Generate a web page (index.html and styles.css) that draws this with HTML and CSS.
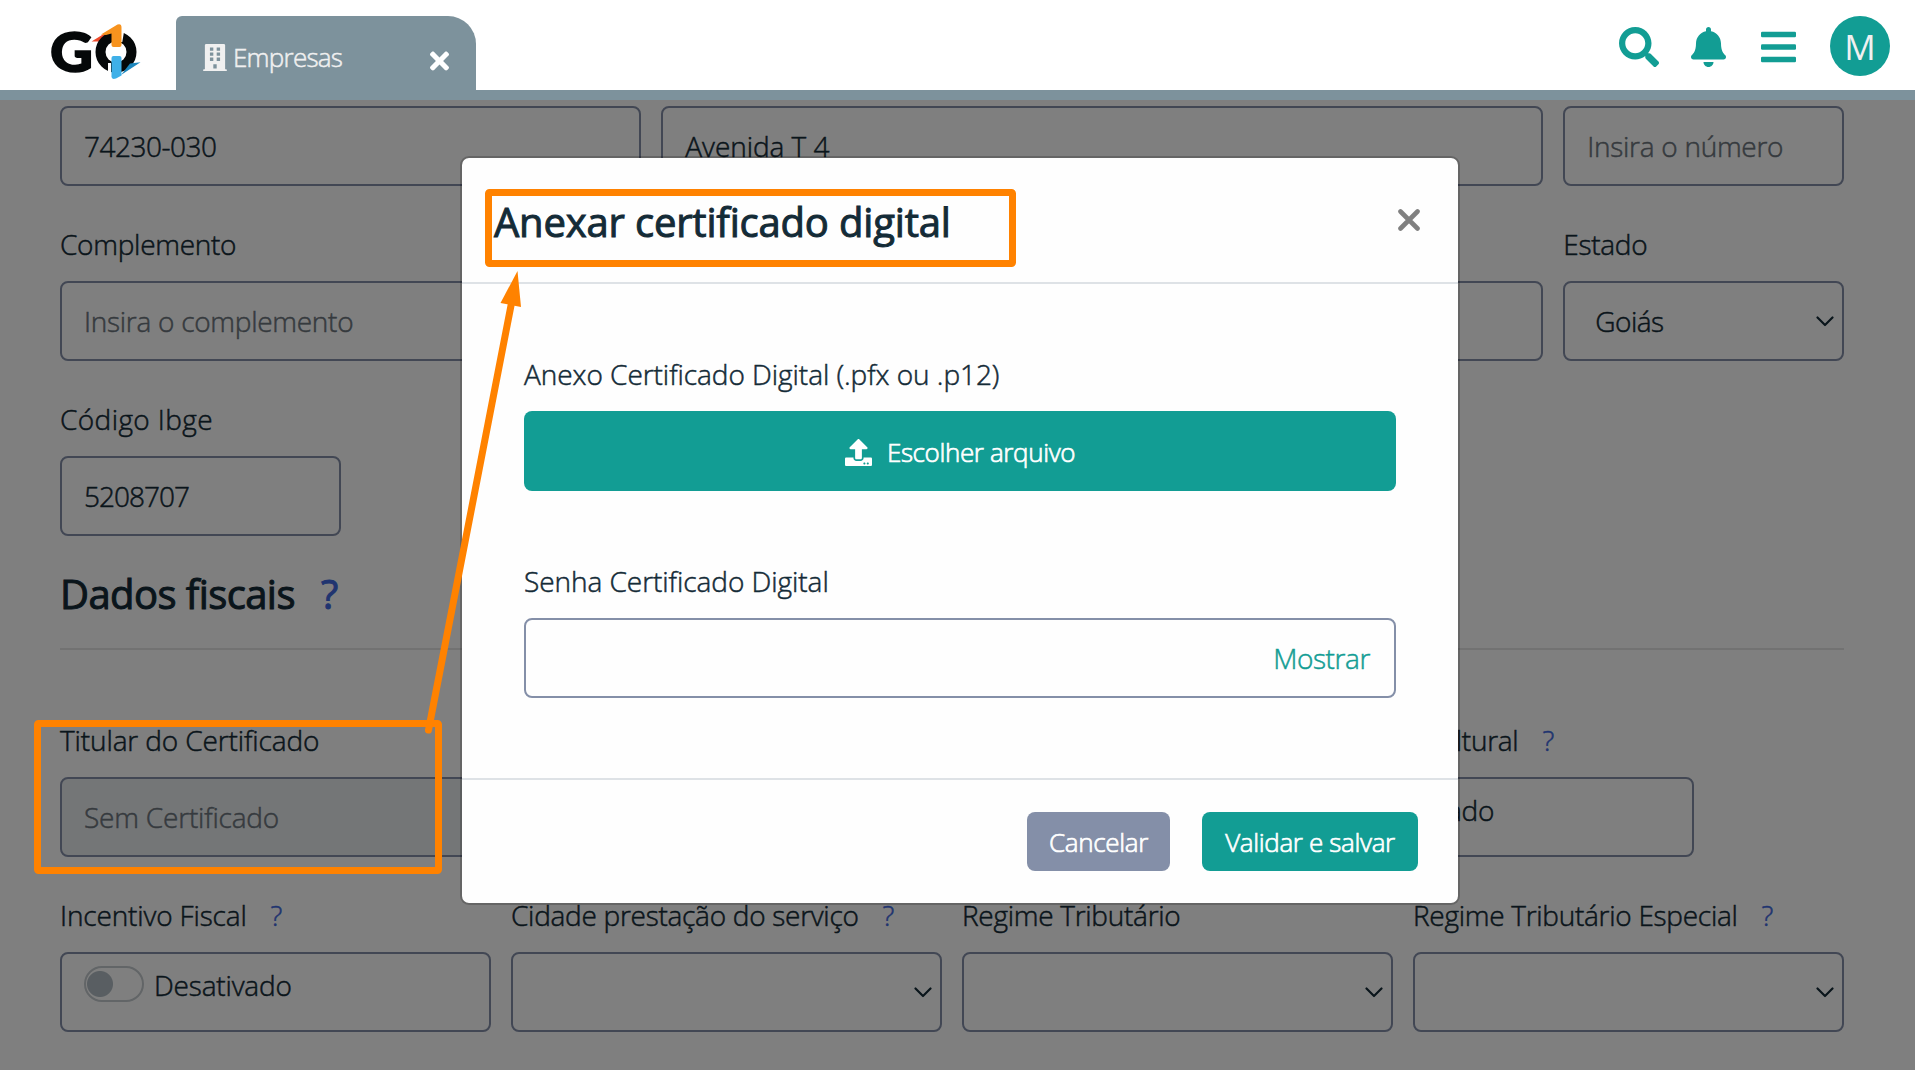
FILE: index.html
```html
<!DOCTYPE html>
<html lang="pt-BR">
<head>
<meta charset="utf-8">
<title>Empresas</title>
<link rel="stylesheet" href="styles.css">
</head>
<body>
<header class="topbar">
  <svg class="logo" viewBox="0 0 92 56" role="img" aria-label="GO">
    <text class="logo-letter" x="-1" y="48.3" textLength="43" lengthAdjust="spacingAndGlyphs">G</text>
    <path d="M40.500 17.500 60 5.500v4L54 13l-6 4.500z" fill="#ee4a2b"/>
    <circle cx="65" cy="28" r="15.500" fill="none" stroke="#050809" stroke-width="10"/>
    <path d="M70 6h3.300l-2 12H70zM57 39h3v12l-3-1z" fill="#fff"/>
    <path d="M79 39.500 89.500 38.300 70 51z" fill="#1c86bd"/>
    <path d="M50 10.500 66.500.6Q70.500-.6 70.500 3.500V21q0 2-2 2h-6q-2 0-2-2V9.500L55 11z" fill="#f7931e"/>
    <path d="M60.500 34q0-2 2-2h6q2 0 2 2v17.500l-5.500 3q-4.500 1.500-4.500-2z" fill="#3fb0e8"/>
  </svg>
  <div class="tab">
    <svg class="tab-icon" viewBox="0 0 448 512"><path fill-rule="evenodd" d="M436 480h-20V24c0-13-11-24-24-24H56C43 0 32 11 32 24v456H12c-7 0-12 5-12 12v20h448v-20c0-7-5-12-12-12zM128 64h64v64h-64zM256 64h64v64h-64zM128 160h64v64h-64zM256 160h64v64h-64zM128 256h64v64h-64zM256 256h64v64h-64zM192 384h64v80h-64z"/></svg>
    <span class="tab-name">Empresas</span>
    <svg class="tab-close" viewBox="0 0 352 512"><path d="M242.720 256l100.070-100.070c12.280-12.280 12.280-32.190 0-44.480l-22.240-22.240c-12.280-12.280-32.190-12.280-44.480 0L176 189.280 75.930 89.210c-12.280-12.280-32.190-12.280-44.480 0L9.210 111.450c-12.280 12.280-12.280 32.190 0 44.480L109.280 256 9.210 356.070c-12.280 12.280-12.280 32.190 0 44.480l22.240 22.240c12.280 12.280 32.200 12.280 44.480 0L176 322.720l100.070 100.070c12.280 12.280 32.200 12.280 44.480 0l22.240-22.240c12.280-12.280 12.280-32.190 0-44.480L242.720 256z"/></svg>
  </div>
  <nav class="actions">
    <svg class="action-search" viewBox="0 0 512 512"><path d="M505 442.700L405.300 343c-4.500-4.500-10.600-7-17-7H372c27.600-35.300 44-79.700 44-128C416 93.100 322.900 0 208 0S0 93.100 0 208s93.100 208 208 208c48.300 0 92.700-16.400 128-44v16.300c0 6.400 2.500 12.500 7 17l99.700 99.700c9.400 9.400 24.600 9.400 33.900 0l28.300-28.300c9.400-9.400 9.400-24.600.1-34zM208 336c-70.700 0-128-57.200-128-128 0-70.700 57.200-128 128-128 70.700 0 128 57.200 128 128 0 70.700-57.200 128-128 128z"/></svg>
    <svg class="action-icon" viewBox="0 0 448 512"><path d="M224 512c35.320 0 63.970-28.650 63.970-64H160.030c0 35.350 28.650 64 63.970 64zm215.390-149.710c-19.320-20.760-55.470-51.990-55.470-154.290 0-77.700-54.480-139.900-127.940-155.160V32c0-17.670-14.320-32-31.980-32s-31.980 14.330-31.980 32v20.840C118.560 68.100 64.080 130.300 64.080 208c0 102.300-36.150 133.530-55.470 154.290-6 6.450-8.660 14.160-8.610 21.710.11 16.400 12.980 32 32.100 32h383.800c19.120 0 32-15.600 32.100-32 .05-7.550-2.610-15.270-8.610-21.710z"/></svg>
    <svg class="action-icon" viewBox="0 0 448 512"><rect y="60" width="448" height="72" rx="16"/><rect y="220" width="448" height="72" rx="16"/><rect y="380" width="448" height="72" rx="16"/></svg>
    <span class="avatar">M</span>
  </nav>
</header>

<main class="page">
  <form class="form">
    <div class="row">
      <div class="field span-4"><div class="box digits">74230-030</div></div>
      <div class="field span-6"><div class="box street">Avenida T 4</div></div>
      <div class="field span-2"><div class="box placeholder">Insira o número</div></div>
    </div>
    <div class="row">
      <div class="field span-4"><div class="label">Complemento</div><div class="box placeholder">Insira o complemento</div></div>
      <div class="field span-6"><div class="label"></div><div class="box"></div></div>
      <div class="field span-2"><div class="label">Estado</div><div class="box select">Goiás<svg class="chevron" viewBox="0 0 18 11"><path d="M1.500 1.500 9 9l7.500-7.500"/></svg></div></div>
    </div>
    <div class="row">
      <div class="field span-2"><div class="label code">Código Ibge</div><div class="box digits-wide">5208707</div></div>
    </div>
    <h2 class="section-title">Dados fiscais<span class="help">?</span></h2>
    <div class="rule"></div>
    <div class="row">
      <div class="field span-4"><div class="label holder">Titular do Certificado</div><div class="box placeholder disabled">Sem Certificado</div></div>
      <div class="field span-3 from-9"><div class="label">Incentivador Cultural<span class="help">?</span></div><div class="box toggle-box"><span class="toggle"></span>Desativado</div></div>
    </div>
    <div class="row">
      <div class="field span-3"><div class="label fiscal">Incentivo Fiscal<span class="help">?</span></div><div class="box toggle-box"><span class="toggle"></span>Desativado</div></div>
      <div class="field span-3"><div class="label">Cidade prestação do serviço<span class="help">?</span></div><div class="box select"><svg class="chevron" viewBox="0 0 18 11"><path d="M1.500 1.500 9 9l7.500-7.500"/></svg></div></div>
      <div class="field span-3"><div class="label">Regime Tributário</div><div class="box select"><svg class="chevron" viewBox="0 0 18 11"><path d="M1.500 1.500 9 9l7.500-7.500"/></svg></div></div>
      <div class="field span-3"><div class="label">Regime Tributário Especial<span class="help">?</span></div><div class="box select"><svg class="chevron" viewBox="0 0 18 11"><path d="M1.500 1.500 9 9l7.500-7.500"/></svg></div></div>
    </div>
  </form>
</main>

<div class="backdrop">
  <section class="modal">
    <div class="modal-header">
      <h1 class="modal-title">Anexar certificado digital</h1>
      <svg class="modal-close" viewBox="0 0 22 22"><path d="M2.500 2.500l17 17M19.500 2.500l-17 17"/></svg>
    </div>
    <div class="modal-body">
      <div class="label modal-label">Anexo Certificado Digital (.pfx ou .p12)</div>
      <div class="upload">
        <svg class="upload-icon" viewBox="0 0 512 512"><path d="M296 384h-80c-13.300 0-24-10.700-24-24V192h-87.700c-17.800 0-26.700-21.500-14.100-34.100L242.300 5.700c7.500-7.500 19.800-7.500 27.300 0l152.200 152.200c12.600 12.600 3.700 34.100-14.100 34.100H320v168c0 13.300-10.700 24-24 24zm216-8v112c0 13.300-10.700 24-24 24H24c-13.300 0-24-10.700-24-24V376c0-13.300 10.700-24 24-24h136v8c0 30.900 25.100 56 56 56h80c30.900 0 56-25.100 56-56v-8h136c13.300 0 24 10.700 24 24zm-124 88c0-11-9-20-20-20s-20 9-20 20 9 20 20 20 20-9 20-20zm64 0c0-11-9-20-20-20s-20 9-20 20 9 20 20 20 20-9 20-20z"/></svg>
        <span class="upload-text">Escolher arquivo</span>
      </div>
      <div class="label modal-label second">Senha Certificado Digital</div>
      <div class="box password"><span class="show">Mostrar</span></div>
    </div>
    <div class="modal-footer">
      <div class="button cancel">Cancelar</div>
      <div class="button save">Validar e salvar</div>
    </div>
  </section>
</div>

<svg class="annotations" viewBox="0 0 1915 1070">
  <rect x="37.500" y="723.500" width="401" height="147" rx="1"/>
  <rect x="488.500" y="192.500" width="524" height="71" rx="1"/>
  <path class="shaft" d="M428.500 730 511.500 303"/>
  <path class="tip" d="M517.500 271 500.500 303 521 307z"/>
</svg>
</body>
</html>
```
FILE: styles.css
```css
* { box-sizing: border-box; }

body {
  margin: 0;
  height: 1070px;
  overflow: hidden;
  position: relative;
  background: #fff;
  color: #142b37;
  font-family: "Open Sans", "Noto Sans", sans-serif;
  font-size: 28px;
  font-weight: 300;
  letter-spacing: -0.28px;
  -webkit-text-stroke-width: 0.5px;
}

svg { display: block; flex: none; }

/* Top bar */
.topbar {
  height: 100px;
  display: flex;
  align-items: flex-start;
  padding-left: 51px;
  padding-right: 25px;
  border-bottom: 10px solid #7d929c;
}
.logo { width: 92px; height: 56px; margin-top: 24px; overflow: visible; }
.logo-letter { font-family: Lato, sans-serif; font-weight: 900; font-size: 55px; letter-spacing: 0; fill: #050809; stroke: #050809; stroke-width: 1.5px; }
.tab {
  width: 300px;
  height: 74px;
  margin: 16px 0 0 33px;
  padding: 0 27px;
  display: flex;
  align-items: center;
  background: #7d929c;
  border-radius: 6px 28px 0 0;
  color: #f0f0f0;
}
.tab-icon { width: 24px; height: 27px; fill: #f0f0f0; margin-top: 8px; }
.tab-name { flex: 1; margin: 8px 0 0 6px; font-size: 26px; letter-spacing: -0.75px; }
.tab-close { width: 19px; height: 28px; fill: #fff; margin-top: 16px; }
.actions { margin-left: auto; display: flex; align-items: center; margin-top: 16px; height: 60px; fill: #129d94; }
.action-search { width: 40px; height: 40px; margin: 2px 32px 0 0; }
.action-icon { width: 35px; height: 40px; margin: 2px 35px 0 0; }
.action-icon + .action-icon { margin-right: 34px; }
.avatar {
  width: 60px;
  height: 60px;
  border-radius: 50%;
  background: #129d94;
  color: #f0f0f0;
  text-align: center;
  line-height: 62px;
  font-size: 35px;
  font-weight: 400;
  letter-spacing: 0;
  -webkit-text-stroke-width: 0;
}

/* Form behind the dialog */
.page { padding: 6px 71px 0 60px; }
.row {
  display: grid;
  grid-template-columns: repeat(12, 130.33px);
  column-gap: 20px;
  margin-bottom: 37px;
}
.span-2 { grid-column: span 2; }
.span-3 { grid-column: span 3; }
.span-4 { grid-column: span 4; }
.span-6 { grid-column: span 6; }
.from-9 { grid-column: 9 / span 3; }
.label { height: 42px; line-height: 42px; margin-bottom: 16px; white-space: nowrap; }
.code { letter-spacing: 0.4px; }
.fiscal { letter-spacing: -0.15px; }
.holder { letter-spacing: -0.12px; }
.help { margin-left: 24px; color: #4068e0; }
.box {
  height: 80px;
  display: flex;
  align-items: center;
  padding-left: 22px;
  border: 2px solid #848fa8;
  border-radius: 8px;
  white-space: nowrap;
}
.placeholder { color: #6c757d; }
.disabled { background: #e9ecef; letter-spacing: -0.2px; }
.street { letter-spacing: -0.05px; }
.digits { letter-spacing: -0.5px; }
.digits-wide { letter-spacing: -1px; }
.select { padding-left: 30px; padding-right: 8px; justify-content: space-between; letter-spacing: -0.5px; }
.chevron { width: 18px; height: 11px; margin-left: auto; fill: none; stroke: #142b37; stroke-width: 2.2; stroke-linecap: round; stroke-linejoin: round; }
.toggle-box { padding-bottom: 14px; letter-spacing: -0.18px; }
.toggle {
  width: 60px;
  height: 36px;
  margin: -2px 10px 0 0;
  border: 2px solid #c4cace;
  border-radius: 18px;
  background: radial-gradient(circle at 14px 16px, #b2bdc4 12.5px, transparent 13.5px);
}
.section-title {
  margin: -4px 0 29px;
  height: 50px;
  line-height: 50px;
  font-size: 40px;
  font-weight: 400;
  letter-spacing: -0.58px;
  -webkit-text-stroke-width: 1px;
}
.section-title .help { margin-left: 26px; }
.rule { height: 2px; margin-bottom: 69px; background: rgba(0, 0, 0, 0.1); }

/* Dialog */
.backdrop {
  position: absolute;
  inset: 100px 0 0 0;
  padding: 56px 455px 0 460px;
  background: rgba(0, 0, 0, 0.5);
}
.modal {
  background: #fefefe;
  background-clip: padding-box;
  border: 2px solid rgba(0, 0, 0, 0.2);
  border-radius: 9px;
}
.modal-header {
  height: 126px;
  display: flex;
  justify-content: space-between;
  align-items: center;
  padding: 0 38px 0 32px;
  border-bottom: 2px solid #dee2e6;
}
.modal-title {
  margin: 4px 0 0;
  line-height: 50px;
  font-size: 40px;
  font-weight: 400;
  letter-spacing: -0.18px;
  -webkit-text-stroke-width: 1px;
}
.modal-close { width: 22px; height: 22px; fill: none; stroke: #808080; stroke-width: 4.6; stroke-linecap: round; }
.modal-body { padding: 69px 62px 80px; }
.modal-label { letter-spacing: -0.05px; }
.second { margin-top: 69px; }
.upload {
  height: 80px;
  display: flex;
  justify-content: center;
  align-items: center;
  gap: 15px;
  background: #129d94;
  border-radius: 8px;
  color: #fff;
  font-size: 26px;
  letter-spacing: -0.38px;
  -webkit-text-stroke-width: 0.7px;
}
.upload-text { margin-top: 2px; }
.upload-icon { width: 27px; height: 27px; fill: #fff; margin-top: 2px; }
.password { justify-content: flex-end; padding-right: 24px; }
.show { color: #129d94; letter-spacing: -0.4px; }
.modal-footer {
  height: 125px;
  display: flex;
  justify-content: flex-end;
  align-items: center;
  gap: 32px;
  padding: 0 40px;
  border-top: 2px solid #dee2e6;
}
.button {
  height: 59px;
  line-height: 61px;
  border-radius: 8px;
  text-align: center;
  color: #fff;
  font-size: 26px;
  letter-spacing: -0.35px;
  -webkit-text-stroke-width: 0.7px;
}
.cancel { width: 143px; background: #848fa8; }
.save { width: 216px; background: #129d94; }

/* Highlight boxes and arrow */
.annotations { position: absolute; inset: 0; width: 1915px; height: 1070px; fill: none; stroke: #ff8200; stroke-width: 7; stroke-linejoin: round; stroke-linecap: round; }
.annotations .tip { fill: #ff8200; stroke: none; }
```
